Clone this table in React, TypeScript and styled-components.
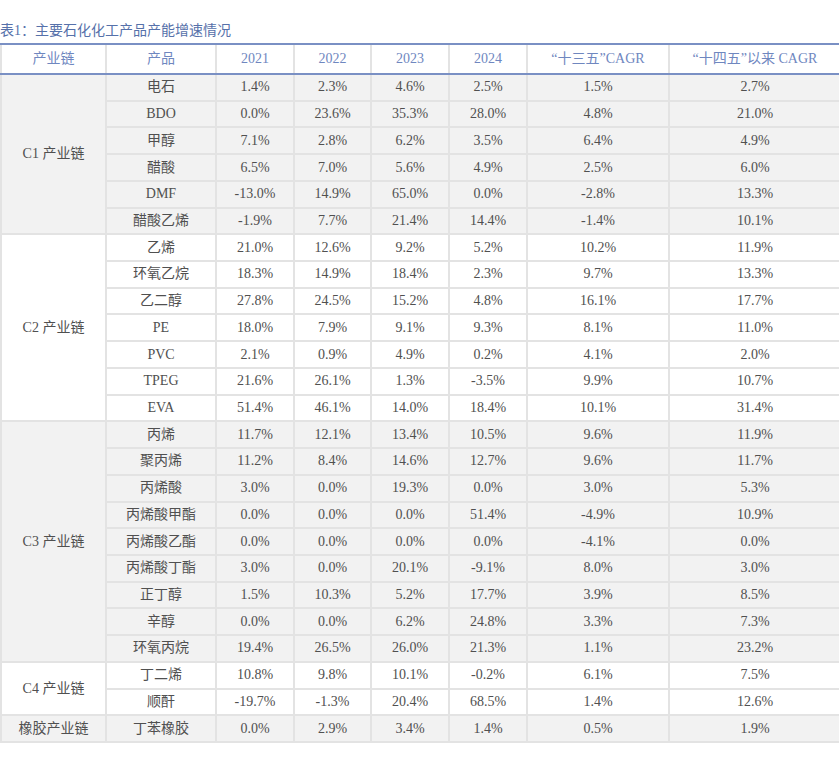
import React from "react";
import styled, { createGlobalStyle } from "styled-components";

const Global = createGlobalStyle`
  html, body { margin: 0; padding: 0; background: #fff; }
  body { font-family: "Liberation Serif", "Noto Sans CJK SC", serif; }
`;

const Page = styled.div`
  width: 839px;
  padding-top: 22px;
`;

const Title = styled.div`
  font-size: 14px;
  line-height: 18px;
  height: 18px;
  color: #5671aa;
  margin-bottom: 3px;
  white-space: nowrap;
`;

const Table = styled.table`
  width: 839px;
  table-layout: fixed;
  border-collapse: collapse;
  font-size: 14px;
  line-height: 16px;
`;

const HeadCell = styled.th`
  height: 28px;
  padding: 0;
  font-weight: normal;
  color: #6f87bf;
  text-align: center;
  white-space: nowrap;
  border-top: 2px solid #7a90c4;
  border-bottom: 2px solid #7a90c4;
  border-left: 2px solid #e3e3e3;
  &:last-child { border-right: none; }
`;

const Row = styled.tr<{ $shade: boolean }>`
  background: ${(p) => (p.$shade ? "#f2f2f2" : "#ffffff")};
`;

const Cell = styled.td`
  height: 24.72px;
  padding: 0;
  color: #505050;
  text-align: center;
  white-space: nowrap;
  border: 2px solid #e3e3e3;
  &:last-child { border-right: none; }
`;

type Group = { name: string; rows: string[][] };

const groups: Group[] = [
  {
    name: "C1 产业链",
    rows: [
      ["电石", "1.4%", "2.3%", "4.6%", "2.5%", "1.5%", "2.7%"],
      ["BDO", "0.0%", "23.6%", "35.3%", "28.0%", "4.8%", "21.0%"],
      ["甲醇", "7.1%", "2.8%", "6.2%", "3.5%", "6.4%", "4.9%"],
      ["醋酸", "6.5%", "7.0%", "5.6%", "4.9%", "2.5%", "6.0%"],
      ["DMF", "-13.0%", "14.9%", "65.0%", "0.0%", "-2.8%", "13.3%"],
      ["醋酸乙烯", "-1.9%", "7.7%", "21.4%", "14.4%", "-1.4%", "10.1%"],
    ],
  },
  {
    name: "C2 产业链",
    rows: [
      ["乙烯", "21.0%", "12.6%", "9.2%", "5.2%", "10.2%", "11.9%"],
      ["环氧乙烷", "18.3%", "14.9%", "18.4%", "2.3%", "9.7%", "13.3%"],
      ["乙二醇", "27.8%", "24.5%", "15.2%", "4.8%", "16.1%", "17.7%"],
      ["PE", "18.0%", "7.9%", "9.1%", "9.3%", "8.1%", "11.0%"],
      ["PVC", "2.1%", "0.9%", "4.9%", "0.2%", "4.1%", "2.0%"],
      ["TPEG", "21.6%", "26.1%", "1.3%", "-3.5%", "9.9%", "10.7%"],
      ["EVA", "51.4%", "46.1%", "14.0%", "18.4%", "10.1%", "31.4%"],
    ],
  },
  {
    name: "C3 产业链",
    rows: [
      ["丙烯", "11.7%", "12.1%", "13.4%", "10.5%", "9.6%", "11.9%"],
      ["聚丙烯", "11.2%", "8.4%", "14.6%", "12.7%", "9.6%", "11.7%"],
      ["丙烯酸", "3.0%", "0.0%", "19.3%", "0.0%", "3.0%", "5.3%"],
      ["丙烯酸甲酯", "0.0%", "0.0%", "0.0%", "51.4%", "-4.9%", "10.9%"],
      ["丙烯酸乙酯", "0.0%", "0.0%", "0.0%", "0.0%", "-4.1%", "0.0%"],
      ["丙烯酸丁酯", "3.0%", "0.0%", "20.1%", "-9.1%", "8.0%", "3.0%"],
      ["正丁醇", "1.5%", "10.3%", "5.2%", "17.7%", "3.9%", "8.5%"],
      ["辛醇", "0.0%", "0.0%", "6.2%", "24.8%", "3.3%", "7.3%"],
      ["环氧丙烷", "19.4%", "26.5%", "26.0%", "21.3%", "1.1%", "23.2%"],
    ],
  },
  {
    name: "C4 产业链",
    rows: [
      ["丁二烯", "10.8%", "9.8%", "10.1%", "-0.2%", "6.1%", "7.5%"],
      ["顺酐", "-19.7%", "-1.3%", "20.4%", "68.5%", "1.4%", "12.6%"],
    ],
  },
  {
    name: "橡胶产业链",
    rows: [["丁苯橡胶", "0.0%", "2.9%", "3.4%", "1.4%", "0.5%", "1.9%"]],
  },
];

const widths = [105, 110, 78, 77, 78, 78, 142, 171];
const headers = ["产业链", "产品", "2021", "2022", "2023", "2024", "“十三五”CAGR", "“十四五”以来 CAGR"];

export default function App() {
  return (
    <Page>
      <Global />
      <Title>表1：主要石化化工产品产能增速情况</Title>
      <Table>
        <colgroup>
          {widths.map((w, i) => (
            <col key={i} style={{ width: w }} />
          ))}
        </colgroup>
        <thead>
          <tr>
            {headers.map((h) => (
              <HeadCell key={h}>{h}</HeadCell>
            ))}
          </tr>
        </thead>
        <tbody>
          {groups.map((g, gi) =>
            g.rows.map((r, ri) => (
              <Row key={`${gi}-${ri}`} $shade={gi % 2 === 0}>
                {ri === 0 && <Cell rowSpan={g.rows.length}>{g.name}</Cell>}
                {r.map((v, ci) => (
                  <Cell key={ci}>{v}</Cell>
                ))}
              </Row>
            ))
          )}
        </tbody>
      </Table>
    </Page>
  );
}
